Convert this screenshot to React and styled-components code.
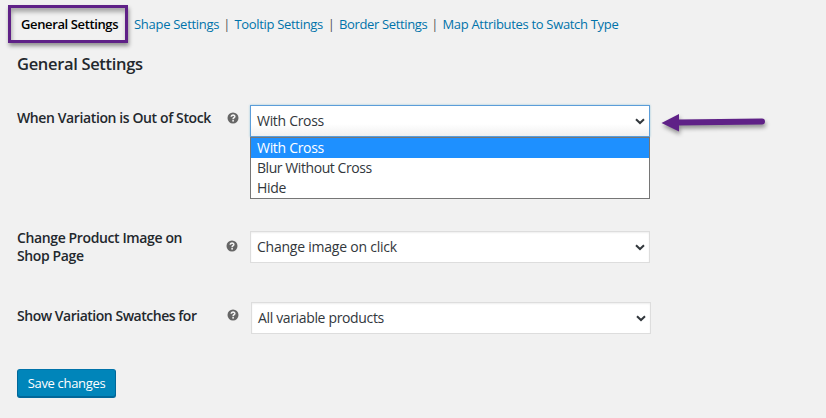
import React from 'react'
import styled, { createGlobalStyle } from 'styled-components'

const tabs = [
    { name: 'Shape Settings', width: 85, spacing: '-0.28px' },
    { name: 'Tooltip Settings', width: 89, spacing: '-0.32px' },
    { name: 'Border Settings', width: 88, spacing: '-0.35px' },
    { name: 'Map Attributes to Swatch Type', width: 177, spacing: '-0.32px' },
]

const options = [
    { name: 'With Cross', spacing: '-0.3px' },
    { name: 'Blur Without Cross', spacing: '-0.43px' },
    { name: 'Hide', spacing: '-0.3px' },
]

function HelpTip() {
    return (
        <Help viewBox="0 0 12 12" aria-label="Help">
            <circle cx="6" cy="6" r="5.5" fill="#666" />
            <path d="M4.2 4.7C4.2 2.6 7.8 2.6 7.8 4.5C7.8 5.7 6.1 5.7 6.1 7.3" fill="none" stroke="#f1f1f1" strokeWidth="1.6" />
            <rect x="5.3" y="8" width="1.6" height="1.6" fill="#f1f1f1" />
        </Help>
    )
}

function SelectBox({ value, open, spacing }) {
    return (
        <Select $open={open} $spacing={spacing}>
            {value}
            <Chevron viewBox="0 0 10 7">
                <path d="M1 1.2L5 5L9 1.2" fill="none" stroke="#32373c" strokeWidth="2" />
            </Chevron>
        </Select>
    )
}

export default function App() {
    return (
        <>
            <GlobalStyle />
            <Page>
                <Nav>
                    <Current>General Settings</Current>
                    {tabs.map((tab, i) => (
                        <React.Fragment key={tab.name}>
                            {i > 0 && <Divider>|</Divider>}
                            <Tab href="#" $width={tab.width} $spacing={tab.spacing}>{tab.name}</Tab>
                        </React.Fragment>
                    ))}
                </Nav>
                <Title>General Settings</Title>
                <Row $height={126}>
                    <Label $top={4} $spacing="-0.39px">When Variation is Out of Stock</Label>
                    <Tip $top={7}><HelpTip /></Tip>
                    <Field>
                        <SelectBox value="With Cross" spacing="-0.3px" open />
                        <List>
                            {options.map((option, i) => (
                                <Option key={option.name} $active={i === 0} $spacing={option.spacing}>{option.name}</Option>
                            ))}
                        </List>
                    </Field>
                    <Arrow viewBox="0 0 110 30">
                        <path d="M17 14.5L101 13.5" stroke="#5f2187" strokeWidth="6" strokeLinecap="round" />
                        <path d="M0.5 15L18 6V23.5Z" fill="#5f2187" />
                    </Arrow>
                </Row>
                <Row $height={71}>
                    <Label $top={-2} $spacing="-0.38px">Change Product Image on<br />Shop Page</Label>
                    <Tip $top={9} $left={-1}><HelpTip /></Tip>
                    <Field><SelectBox value="Change image on click" spacing="-0.23px" /></Field>
                </Row>
                <Row $height={67}>
                    <Label $top={5} $spacing="-0.48px">Show Variation Swatches for</Label>
                    <Tip $top={7}><HelpTip /></Tip>
                    <Field $left={1}><SelectBox value="All variable products" spacing="-0.35px" /></Field>
                </Row>
                <Save type="button">Save changes</Save>
            </Page>
        </>
    )
}

const GlobalStyle = createGlobalStyle`
    * {
        box-sizing: border-box;
    }
    body {
        margin: 0;
        background: #f1f1f1;
        font-family: "Open Sans", "Noto Sans", sans-serif;
        color: #23282d;
    }`
const Page = styled.main`
    height: 418px;
    padding: 5px 0 0 17px;
    overflow: hidden;`
const Nav = styled.nav`
    display: flex;
    height: 38px;
    margin-left: -9px;
    font-size: 13px;
    line-height: 38px;
    white-space: nowrap;`
const Current = styled.a`
    width: 120px;
    margin-right: 6px;
    padding-left: 10px;
    border: 3px solid #5f2187;
    color: #000;
    font-weight: 600;
    line-height: 32px;
    letter-spacing: -0.38px;
    box-shadow: 1px 3px 4px rgba(0, 0, 0, 0.4), inset 1px 4px 4px rgba(0, 0, 0, 0.3);`
const Tab = styled.a`
    width: ${(props) => props.$width}px;
    color: #0073aa;
    letter-spacing: ${(props) => props.$spacing};
    text-decoration: none;`
const Divider = styled.span`
    width: 15.5px;
    text-align: center;
    color: #555;`
const Title = styled.h2`
    height: 24px;
    margin: 9px 0 29px;
    font-size: 16.5px;
    font-weight: 600;
    line-height: 24px;
    letter-spacing: -0.33px;`
const Row = styled.div`
    display: grid;
    grid-template-columns: 210px 23px 400px 1fr;
    height: ${(props) => props.$height}px;`
const Label = styled.label`
    padding-top: ${(props) => Math.max(props.$top, 0)}px;
    margin-top: ${(props) => Math.min(props.$top, 0)}px;
    font-size: 14px;
    font-weight: 600;
    line-height: 18px;
    letter-spacing: ${(props) => props.$spacing};
    white-space: nowrap;`
const Tip = styled.span`
    margin: ${(props) => props.$top}px 0 0 ${(props) => props.$left || 0}px;`
const Help = styled.svg`
    display: block;
    width: 12px;
    height: 12px;`
const Field = styled.div`
    margin-left: ${(props) => props.$left || 0}px;
    width: 400px;`
const Select = styled.div`
    display: flex;
    align-items: center;
    justify-content: space-between;
    height: 32px;
    padding: 0 4px 0 6px;
    border: 1px solid ${(props) => (props.$open ? '#5b9dd9' : '#ddd')};
    background: ${(props) => (props.$open ? 'linear-gradient(#fff 60%, #f0f0f0)' : '#fff')};
    box-shadow: ${(props) => (props.$open ? '0 0 2px rgba(30, 140, 190, 0.4)' : 'inset 0 1px 2px rgba(0, 0, 0, 0.07)')};
    color: #32373c;
    font-size: 14px;
    line-height: 18px;
    letter-spacing: ${(props) => props.$spacing};`
const Chevron = styled.svg`
    width: 10px;
    height: 7px;`
const List = styled.div`
    height: 62px;
    border: 1px solid #767676;
    background: #fff;`
const Option = styled.div`
    height: 20px;
    padding-left: 6px;
    background: ${(props) => (props.$active ? '#1e90ff' : '#fff')};
    color: ${(props) => (props.$active ? '#fff' : '#32373c')};
    font-size: 14px;
    line-height: 20px;
    letter-spacing: ${(props) => props.$spacing};`
const Arrow = styled.svg`
    width: 110px;
    height: 30px;
    margin: 3px 0 0 11px;
    overflow: visible;
    filter: drop-shadow(1px 3px 2px rgba(0, 0, 0, 0.4));`
const Save = styled.button`
    display: block;
    width: 99px;
    height: 29px;
    padding: 0;
    border: 1px solid #006799;
    border-top-color: #0073aa;
    border-radius: 3px;
    background: #0085ba;
    box-shadow: inset 0 -1px 0 #006799;
    color: #fff;
    font-family: inherit;
    font-size: 13px;
    line-height: 25px;
    letter-spacing: -0.32px;`
